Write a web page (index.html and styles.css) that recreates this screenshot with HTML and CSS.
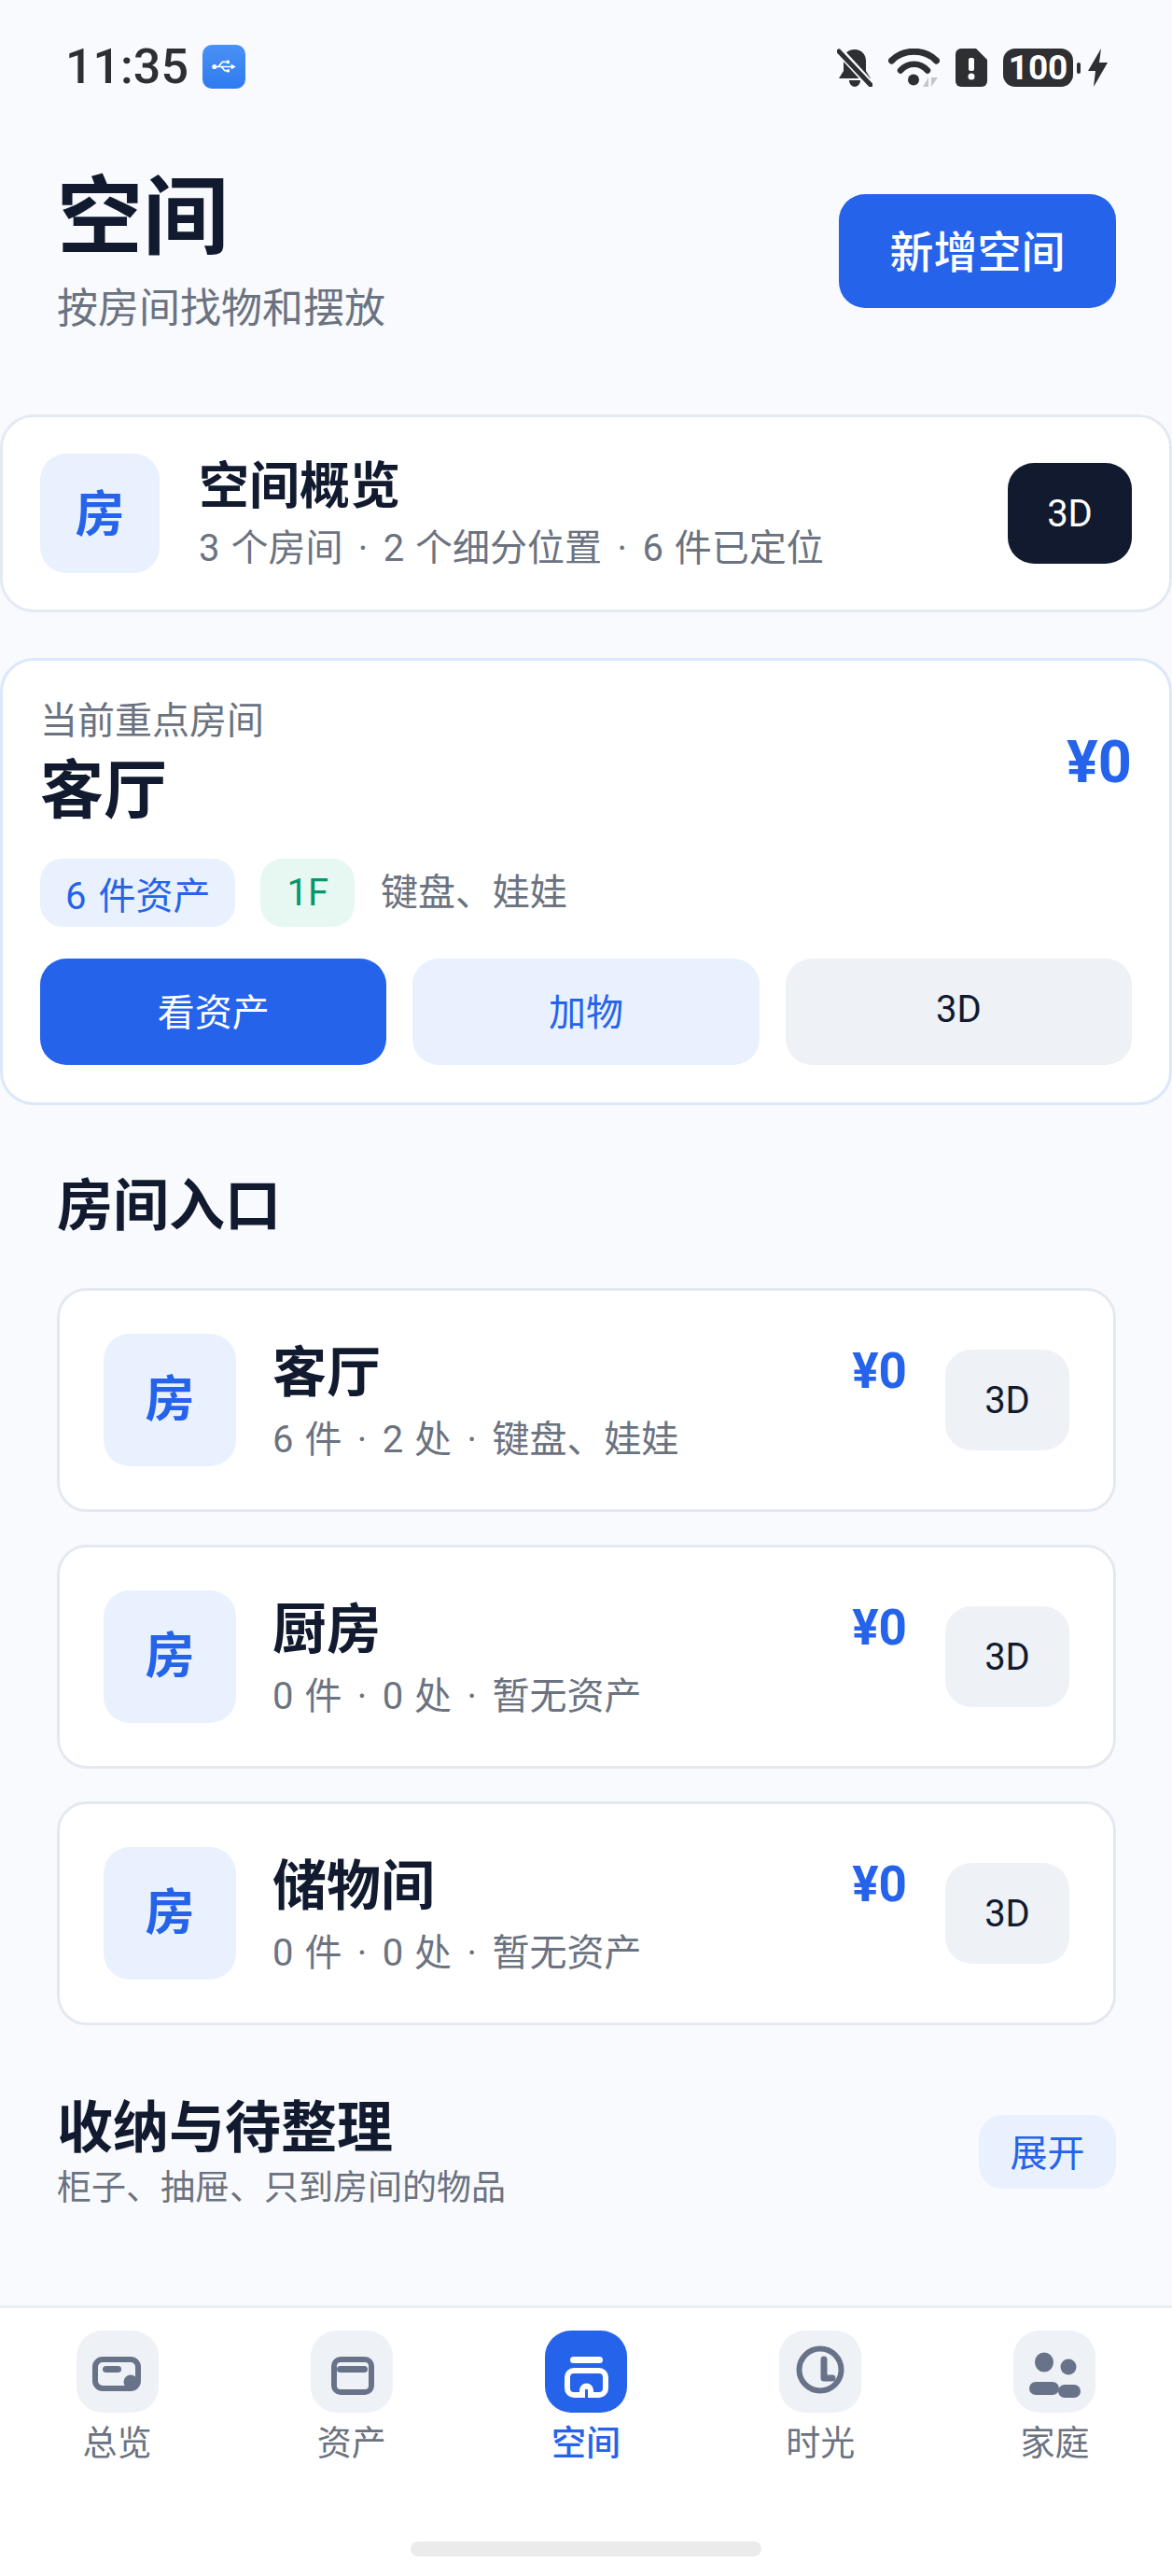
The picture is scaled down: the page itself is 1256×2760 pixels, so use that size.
FILE: index.html
```html
<!DOCTYPE html>
<html lang="zh-CN">
<head>
    <meta charset="UTF-8">
    <title>空间</title>
    <link rel="stylesheet" href="styles.css">
</head>
<body>
    <div class="status">
        <div class="status-left">
            <span class="clock">11:35</span>
            <span class="usb">
                <svg width="28" height="17" viewBox="0 0 30 20"><path d="M3 10h23M8 10l5-6h5M12 10l4 5h3" fill="none" stroke="#fff" stroke-width="2"/><circle cx="3" cy="10" r="3" fill="#fff"/><path d="M24 6.5l6 3.5-6 3.5z" fill="#fff"/><rect x="18" y="2" width="4" height="4" fill="#fff"/><circle cx="20" cy="15" r="2.2" fill="#fff"/></svg>
            </span>
        </div>
        <div class="status-right">
            <svg class="st-bell" width="38" height="41" viewBox="0 0 38 41"><path d="M19 1c7 0 12 5 12 12v11l5 8H2l5-8V12C7 5 12 1 19 1z" fill="#2d2f33"/><path d="M13 34h12c0 4-3 7-6 7s-6-3-6-7z" fill="#2d2f33"/><path d="M1 1l36 39" stroke="#f8fafd" stroke-width="9"/><path d="M2 3l34 36" stroke="#2d2f33" stroke-width="5" stroke-linecap="round"/></svg>
            <svg class="st-wifi" width="55" height="41" viewBox="0 0 55 41"><g fill="none" stroke="#2d2f33" stroke-linecap="round"><path d="M3.5 13C16 0 39 0 51.5 13" stroke-width="7"/><path d="M13 23.5c8-9 21-9 29 0" stroke-width="6.5"/></g><circle cx="27" cy="33.5" r="6" fill="#2d2f33"/><path d="M43 41v-10l-6 10zM46 31v10l7-10z" fill="#c4c6ca"/></svg>
            <svg class="st-alert" width="34" height="41" viewBox="0 0 34 41"><path d="M6 0h16l12 12v23a6 6 0 0 1-6 6H6a6 6 0 0 1-6-6V6a6 6 0 0 1 6-6z" fill="#2d2f33"/><rect x="14" y="10" width="6" height="14" rx="2" fill="#fff"/><circle cx="17" cy="30" r="3.5" fill="#fff"/></svg>
            <span class="battery"><span class="battery-num">100</span></span>
            <span class="battery-tip"></span>
            <svg class="st-bolt" width="21" height="41" viewBox="0 0 21 41"><path d="M14 0L0 24h8L6 41l15-26h-9z" fill="#2d2f33"/></svg>
        </div>
    </div>

    <header class="page-head">
        <div>
            <h1 class="page-title">空间</h1>
            <p class="page-sub">按房间找物和摆放</p>
        </div>
        <button class="btn-new">新增空间</button>
    </header>

    <section class="card overview">
        <div class="room-icon small">房</div>
        <div class="overview-text">
            <div class="overview-title">空间概览</div>
            <div class="meta">3 个房间 <span class="dot">·</span> 2 个细分位置 <span class="dot">·</span> 6 件已定位</div>
        </div>
        <button class="btn-3d dark">3D</button>
    </section>

    <section class="card focus">
        <div class="focus-top">
            <div>
                <div class="focus-label">当前重点房间</div>
                <div class="focus-name">客厅</div>
            </div>
            <div class="focus-price">¥0</div>
        </div>
        <div class="chips">
            <span class="chip blue">6 件资产</span>
            <span class="chip green">1F</span>
            <span class="meta">键盘、娃娃</span>
        </div>
        <div class="actions">
            <button class="action primary">看资产</button>
            <button class="action light">加物</button>
            <button class="action gray">3D</button>
        </div>
    </section>

    <h2 class="section-title">房间入口</h2>

    <div class="room-list">
        <div class="room">
            <div class="room-icon">房</div>
            <div class="room-text">
                <div class="room-name">客厅</div>
                <div class="meta">6 件 <span class="dot">·</span> 2 处 <span class="dot">·</span> 键盘、娃娃</div>
            </div>
            <div class="room-price">¥0</div>
            <button class="btn-3d">3D</button>
        </div>
        <div class="room">
            <div class="room-icon">房</div>
            <div class="room-text">
                <div class="room-name">厨房</div>
                <div class="meta">0 件 <span class="dot">·</span> 0 处 <span class="dot">·</span> 暂无资产</div>
            </div>
            <div class="room-price">¥0</div>
            <button class="btn-3d">3D</button>
        </div>
        <div class="room">
            <div class="room-icon">房</div>
            <div class="room-text">
                <div class="room-name">储物间</div>
                <div class="meta">0 件 <span class="dot">·</span> 0 处 <span class="dot">·</span> 暂无资产</div>
            </div>
            <div class="room-price">¥0</div>
            <button class="btn-3d">3D</button>
        </div>
    </div>

    <div class="storage">
        <div>
            <h2 class="storage-title">收纳与待整理</h2>
            <div class="storage-sub">柜子、抽屉、只到房间的物品</div>
        </div>
        <button class="btn-expand">展开</button>
    </div>

    <nav class="tabbar">
        <div class="tab">
            <span class="tab-icon">
                <svg width="88" height="88" viewBox="0 0 88 88"><rect x="20" y="31" width="46" height="31" rx="8" fill="none" stroke="#68738a" stroke-width="6"/><rect x="28" y="38" width="20" height="7" rx="3.5" fill="#68738a"/><circle cx="58" cy="55" r="7.5" fill="#68738a"/></svg>
            </span>
            <span class="tab-label">总览</span>
        </div>
        <div class="tab">
            <span class="tab-icon">
                <svg width="88" height="88" viewBox="0 0 88 88"><rect x="25" y="31" width="40" height="35" rx="7" fill="none" stroke="#68738a" stroke-width="6"/><rect x="28" y="38" width="33" height="7" rx="3.5" fill="#68738a"/></svg>
            </span>
            <span class="tab-label">资产</span>
        </div>
        <div class="tab active">
            <span class="tab-icon">
                <svg width="88" height="88" viewBox="0 0 88 88"><rect x="27" y="28" width="35" height="7" rx="3.5" fill="#fff"/><rect x="24" y="43" width="41" height="26" rx="7" fill="none" stroke="#fff" stroke-width="6"/><path d="M37 72V64a7 7 0 0 1 15 0v8z" fill="#fff"/><rect x="43" y="63" width="3" height="9" fill="#2563eb"/></svg>
            </span>
            <span class="tab-label">空间</span>
        </div>
        <div class="tab">
            <span class="tab-icon">
                <svg width="88" height="88" viewBox="0 0 88 88"><circle cx="44" cy="42" r="22.5" fill="none" stroke="#68738a" stroke-width="6"/><path d="M48 31v20h9" fill="none" stroke="#68738a" stroke-width="7" stroke-linecap="round" stroke-linejoin="round"/></svg>
            </span>
            <span class="tab-label">时光</span>
        </div>
        <div class="tab">
            <span class="tab-icon">
                <svg width="88" height="88" viewBox="0 0 88 88"><ellipse cx="33" cy="34" rx="10" ry="10.5" fill="#68738a"/><ellipse cx="59" cy="39" rx="8.5" ry="8.5" fill="#68738a"/><rect x="17" y="55" width="32" height="14" rx="7" fill="#68738a"/><rect x="48" y="58" width="24" height="14" rx="7" fill="#68738a"/></svg>
            </span>
            <span class="tab-label">家庭</span>
        </div>
        <div class="home-bar"></div>
    </nav>
</body>
</html>
```

FILE: styles.css
```css
* {
    box-sizing: border-box;
}

body {
    font-family: Roboto, "Noto Sans CJK SC", sans-serif;
    background-color: #f8fafd;
    color: #111a2e;
    margin: 0;
    width: 1256px;
    height: 2760px;
    overflow: hidden;
    display: flex;
    flex-direction: column;
}

button {
    font-family: inherit;
    border: none;
    padding: 0;
}

.status {
    height: 190px;
    padding: 48px 69px 0 70px;
    display: flex;
    justify-content: space-between;
    align-items: flex-start;
}

.status-left {
    display: flex;
    align-items: center;
    gap: 15px;
    height: 47px;
}

.clock {
    font-family: Roboto, sans-serif;
    font-size: 52px;
    font-weight: 500;
    color: #2d2f33;
}

.usb {
    width: 46px;
    height: 47px;
    border-radius: 10px;
    background: linear-gradient(#4a90f5, #2f7bf0);
    display: flex;
    align-items: center;
    justify-content: center;
}

.status-right {
    display: flex;
    align-items: center;
    height: 41px;
    margin-top: 4px;
}

.st-wifi {
    margin-left: 17px;
}

.st-alert {
    margin-left: 17px;
}

.battery {
    margin-left: 17px;
    width: 75px;
    height: 41px;
    border-radius: 13px;
    background-color: #2d2f33;
    display: flex;
    align-items: center;
    justify-content: center;
}

.battery-num {
    font-family: Roboto, sans-serif;
    font-size: 37px;
    font-weight: 700;
    color: #fff;
}

.battery-tip {
    margin-left: 4px;
    width: 4px;
    height: 12px;
    border-radius: 2px;
    background-color: #2d2f33;
}

.st-bolt {
    margin-left: 8px;
}

.page-head {
    height: 254px;
    padding: 0 60px 0 61px;
    display: flex;
    justify-content: space-between;
    align-items: flex-start;
}

.page-title {
    font-size: 92px;
    line-height: 88px;
    font-weight: 700;
    margin: 0;
}

.page-sub {
    font-size: 44px;
    line-height: 60px;
    color: #6b7280;
    margin: 23px 0 0;
}

.btn-new {
    width: 297px;
    height: 122px;
    margin-top: 18px;
    padding-bottom: 5px;
    border-radius: 28px;
    background-color: #2563eb;
    color: #fff;
    font-size: 47px;
    font-weight: 500;
}

.card {
    background-color: #fff;
    border: 3px solid #e4eaf3;
    border-radius: 36px;
}

.overview {
    height: 212px;
    padding: 0 40px;
    display: flex;
    align-items: center;
}

.room-icon {
    width: 142px;
    height: 142px;
    padding-bottom: 10px;
    border-radius: 28px;
    background-color: #e9f1fe;
    color: #2563eb;
    font-size: 53px;
    font-weight: 700;
    display: flex;
    align-items: center;
    justify-content: center;
    flex-shrink: 0;
}

.room-icon.small {
    width: 128px;
    height: 128px;
    padding-bottom: 6px;
}

.overview-text {
    margin-left: 42px;
    padding-top: 5px;
    flex: 1;
}

.overview-title {
    font-size: 54px;
    line-height: 64px;
    font-weight: 700;
}

.overview-text .meta {
    margin-top: 7px;
}

.meta {
    font-size: 40px;
    line-height: 54px;
    color: #6b7280;
    word-spacing: 2px;
}

.dot {
    margin: 0 4.5px;
}

.btn-3d {
    width: 133px;
    height: 108px;
    border-radius: 28px;
    background-color: #eef1f6;
    color: #111a2e;
    font-size: 40px;
    flex-shrink: 0;
}

.btn-3d.dark {
    background-color: #111a2e;
    color: #fff;
}

.focus {
    margin-top: 49px;
    height: 479px;
    padding: 42px 40px 0;
    border-color: #dbe8fb;
}

.focus-top {
    display: flex;
    justify-content: space-between;
    align-items: flex-start;
}

.focus-label {
    font-size: 40px;
    line-height: 46px;
    color: #6b7280;
}

.focus-name {
    font-size: 68px;
    line-height: 84px;
    font-weight: 700;
    margin-top: 10px;
}

.focus-price {
    font-size: 63px;
    line-height: 76px;
    font-weight: 700;
    color: #2563eb;
    margin-top: 29px;
}

.chips {
    display: flex;
    align-items: center;
    margin-top: 30px;
    height: 73px;
}

.chip {
    height: 73px;
    border-radius: 24px;
    padding: 0 27px;
    font-size: 40px;
    word-spacing: 3px;
    display: flex;
    align-items: center;
    margin-right: 27px;
}

.chip.blue {
    background-color: #e9f1fe;
    color: #2563eb;
}

.chip.green {
    background-color: #e6f8f1;
    color: #059669;
    padding: 0 28px;
    margin-right: 28px;
}

.actions {
    display: grid;
    grid-template-columns: repeat(3, 1fr);
    gap: 28px;
    margin-top: 34px;
}

.action {
    height: 114px;
    padding-bottom: 5px;
    border-radius: 28px;
    font-size: 40px;
}

.action.primary {
    background-color: #2563eb;
    color: #fff;
}

.action.light {
    background-color: #e9f1fe;
    color: #2563eb;
}

.action.gray {
    background-color: #eef1f6;
    color: #111a2e;
}

.section-title {
    font-size: 60px;
    line-height: 72px;
    font-weight: 700;
    margin: 73px 0 0 61px;
}

.room-list {
    margin: 51px 60px 0 61px;
    display: flex;
    flex-direction: column;
    gap: 35px;
}

.room {
    height: 240px;
    background-color: #fff;
    border: 3px solid #e4e9f1;
    border-radius: 32px;
    padding: 0 47px;
    display: flex;
    align-items: center;
}

.room-text {
    flex: 1;
    margin-left: 39px;
    padding-top: 6px;
}

.room-name {
    font-size: 58px;
    line-height: 70px;
    font-weight: 700;
}

.room .meta {
    margin-top: 10px;
}

.room-price {
    font-size: 53px;
    line-height: 60px;
    font-weight: 700;
    color: #2563eb;
    margin: 0 41px 62px 0;
}

.storage {
    margin: 75px 60px 0 61px;
    display: flex;
    justify-content: space-between;
    align-items: flex-start;
}

.storage-title {
    font-size: 60px;
    line-height: 72px;
    font-weight: 700;
    margin: 0;
}

.storage-sub {
    font-size: 37px;
    line-height: 48px;
    color: #6b7280;
    margin-top: 4px;
}

.btn-expand {
    width: 147px;
    height: 79px;
    margin-top: 21px;
    padding-bottom: 3px;
    border-radius: 26px;
    background-color: #e9f1fe;
    color: #2563eb;
    font-size: 40px;
}

.tabbar {
    margin-top: auto;
    position: relative;
    height: 290px;
    background-color: #fff;
    border-top: 3px solid #e8ecf3;
    padding-top: 24px;
    display: grid;
    grid-template-columns: repeat(5, 1fr);
    align-items: start;
}

.tab {
    display: flex;
    flex-direction: column;
    align-items: center;
}

.tab-icon {
    width: 88px;
    height: 88px;
    border-radius: 28px;
    background-color: #eef1f6;
    display: block;
}

.tab-icon svg {
    display: block;
}

.tab-label {
    font-size: 37px;
    line-height: 48px;
    color: #6b7280;
    margin-top: 10px;
}

.tab.active .tab-icon {
    background-color: #2563eb;
}

.tab.active .tab-label {
    color: #2563eb;
    font-weight: 500;
}

.home-bar {
    position: absolute;
    left: 440px;
    bottom: 21px;
    width: 376px;
    height: 16px;
    border-radius: 8px;
    background-color: #ebebeb;
}
```
